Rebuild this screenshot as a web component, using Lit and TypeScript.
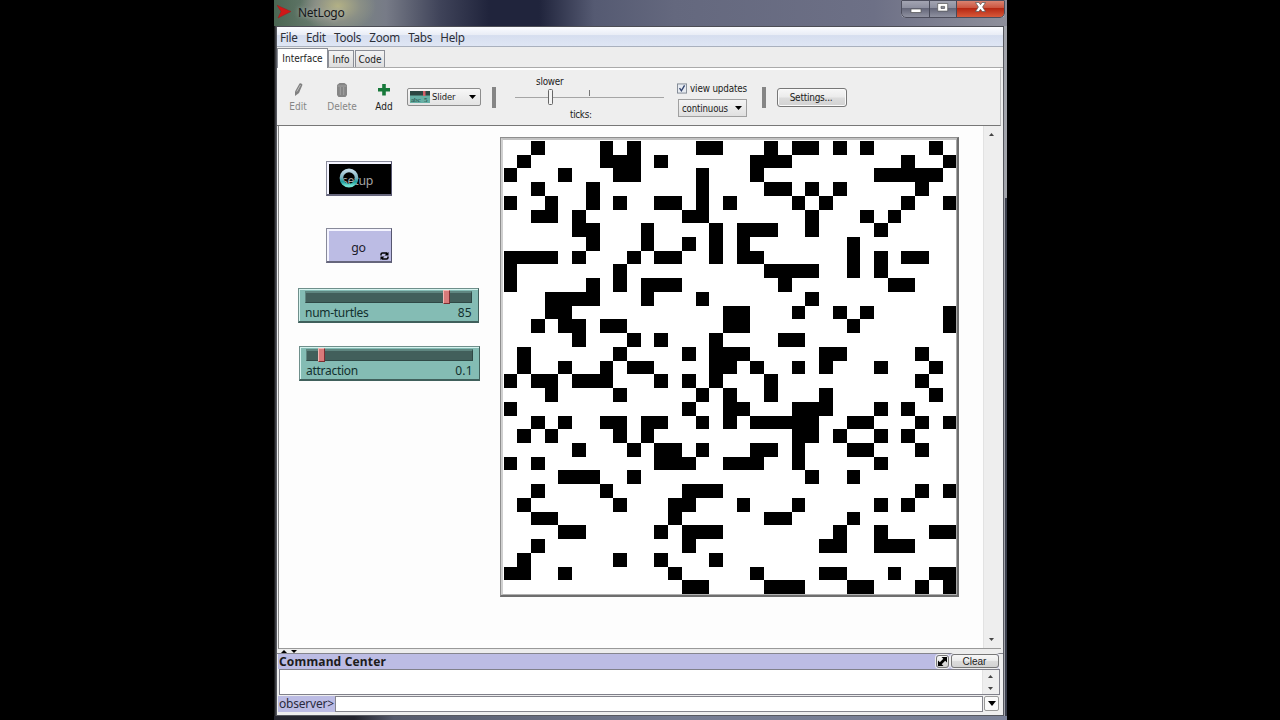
import { LitElement, html, css, svg } from "lit";
import { customElement } from "lit/decorators.js";

// Columns of the black patches, one entry per world row.
const WORLD: number[][] = [
  [2, 7, 9, 14, 15, 19, 21, 22, 24, 26, 31],
  [1, 7, 8, 9, 11, 18, 19, 20, 29, 32],
  [0, 4, 8, 9, 14, 18, 27, 28, 29, 30, 31],
  [2, 6, 14, 19, 20, 22, 24, 30],
  [0, 3, 6, 8, 11, 12, 14, 16, 21, 23, 29, 32],
  [2, 3, 5, 13, 14, 22, 26, 28],
  [5, 6, 10, 15, 17, 18, 19, 22, 27],
  [6, 10, 13, 15, 17, 25],
  [0, 1, 2, 3, 5, 9, 11, 12, 15, 17, 18, 25, 27, 29, 30],
  [0, 8, 19, 20, 21, 22, 25, 27],
  [0, 6, 8, 10, 11, 12, 20, 28, 29],
  [3, 4, 5, 6, 10, 14, 22],
  [3, 4, 16, 17, 21, 24, 26, 32],
  [2, 4, 5, 7, 8, 16, 17, 25, 32],
  [5, 9, 11, 15, 20, 21],
  [1, 8, 13, 15, 16, 17, 23, 24, 30],
  [1, 4, 7, 9, 10, 15, 16, 18, 21, 23, 27, 31],
  [0, 2, 3, 5, 6, 7, 11, 13, 15, 19, 30],
  [3, 8, 14, 16, 19, 23, 31],
  [0, 13, 16, 17, 21, 22, 23, 27, 29],
  [2, 4, 7, 8, 10, 11, 14, 16, 18, 19, 20, 21, 22, 25, 26, 30, 32],
  [1, 3, 8, 10, 21, 22, 24, 27, 29],
  [5, 9, 11, 12, 14, 18, 19, 21, 25, 26, 30],
  [0, 2, 11, 12, 13, 16, 17, 18, 21, 27],
  [4, 5, 6, 9, 22, 25],
  [2, 7, 13, 14, 15, 30, 32],
  [1, 8, 12, 13, 17, 21, 27, 29],
  [2, 3, 12, 19, 20, 25],
  [4, 5, 11, 13, 14, 15, 24, 27, 31, 32],
  [2, 13, 23, 24, 27, 28, 29],
  [1, 8, 11, 15],
  [0, 1, 4, 12, 18, 23, 24, 28, 31, 32],
  [13, 14, 19, 20, 21, 25, 26, 30, 32],
];
const edge = (n: number) => Math.round(n * 13.72 + 0.5);
const rowEdge = (n: number) => Math.round(n * 13.73 + 0.9);

@customElement("world-view")
class WorldView extends LitElement {
  static styles = css`
    :host { display: block; box-sizing: border-box; width: 459px; height: 460px;
      border: 1px solid #8e8e8e; border-right: 2px solid #6e6e6e; border-bottom: 2px solid #6e6e6e;
      background: #fff; }
    .inner { box-sizing: border-box; width: 456px; height: 457px; border: 2px solid #c2c2c2;
      border-left-color: #d0d0d0; border-right: 1px solid #a8a8a8; border-bottom: 1px solid #b0b0b0; }
    svg { display: block; }
  `;
  render() {
    return html`<div class="inner"><svg width="453" height="454" shape-rendering="crispEdges">
      ${WORLD.map((cols, r) => cols.map((c) => svg`<rect x=${edge(c)} y=${rowEdge(r)}
        width=${edge(c + 1) - edge(c)} height=${rowEdge(r + 1) - rowEdge(r)} />`))}
    </svg></div>`;
  }
}

@customElement("model-slider")
class ModelSlider extends LitElement {
  static properties = { name: {}, value: {}, pos: { type: Number } };
  declare name: string;
  declare value: string;
  declare pos: number;
  static styles = css`
    :host { display: block; box-sizing: border-box; width: 181px; height: 35px; background: #84bcb4;
      border: 1px solid #6f8f8b; border-right-color: #40605c; border-bottom: 2px solid #40605c;
      box-shadow: inset 1px 1px #d5f2ee; padding: 2px 6px 0 6px; font: 12px "Noto Sans", sans-serif; color: #12302e; }
    .track { position: relative; height: 9px; background: #425f5b; border: 1px solid #2f4845;
      border-top: 2px solid #5f8680; border-left-color: #5f8680; }
    .thumb { position: absolute; top: -3px; width: 5px; height: 12px; background: #d97a7a;
      border: 1px solid #f3b8b4; border-right-color: #7a2f33; border-bottom-color: #7a2f33; }
    .row { display: flex; justify-content: space-between; line-height: 18px; margin-top: 1px; }
    .label { letter-spacing: -0.28px; }
    .value { letter-spacing: 0.3px; }
  `;
  render() {
    return html`<div class="track"><div class="thumb" style="left:${this.pos}px"></div></div>
      <div class="row"><span class="label">${this.name}</span><span class="value">${this.value}</span></div>`;
  }
}

const arrow = (up: boolean, w = 5, h = 3) => html`<svg width=${w} height=${h} viewBox="0 0 6 4" preserveAspectRatio="none">
  <path d=${up ? "M0 4L3 0L6 4z" : "M0 0L3 4L6 0z"} /></svg>`;

@customElement("app-root")
class AppRoot extends LitElement {
  static styles = css`
    :host { display: flex; width: 1280px; height: 720px; overflow: hidden; background: #000;
      font-family: "DejaVu Sans Condensed", "DejaVu Sans", sans-serif; font-stretch: condensed; font-size: 10px; color: #1c1c1c; white-space: nowrap; }
    * { box-sizing: border-box; }
    svg { display: block; }
    .win { width: 733px; height: 720px; margin-left: 274px; display: flex; flex-direction: column;
      background: linear-gradient(90deg, #1b1b1d 0 1px, #3c3d42 1px 3px, transparent 3px 729px),
        linear-gradient(transparent 198px, #3b3f4c 198px) right / 2px 100% no-repeat, #a2a4ab; }
    .title { height: 26px; flex: none; display: flex; align-items: flex-start;
      background: radial-gradient(ellipse 38px 26px at 64px 6px, #b3b185 0, #8a8f86 60%, transparent 100%),
        linear-gradient(90deg, #4a6652 0, #7b8781 70px, #777b87 112px, #40445a 165px, #20243c 215px, #20243c 265px, #555a72 320px, #64687e 400px, #6d7086 600px, #8e8f9b 733px); }
    .logo { margin: 3px 0 0 3px; }
    .name { margin: 4px 0 0 7px; font: 12px/17px "Noto Sans", sans-serif; letter-spacing: -0.28px; color: #16181a; text-shadow: 0 0 5px #b5bab8; flex: 1; }
    .caps { display: flex; width: 104px; height: 18px; margin-right: 2px; border: 1px solid #d3d4dc; border-top: 0; border-radius: 0 0 5px 5px; overflow: hidden;
      outline: 1px solid #4c4d5c; outline-offset: -1px; }
    .cap { display: flex; justify-content: center; padding-top: 3px; width: 28px; background: linear-gradient(#a6a7b4, #8d8f9f 45%, #656779 50%, #8f91a0); border-right: 1px solid #484a58; }
    .cap.max { width: 27px; }
    .cap.x { flex: 1; border: 0; background: linear-gradient(#dc8a78, #cc5640 45%, #b62813 50%, #d8593a); padding-top: 1px; }
    .body { height: 690px; margin: 0 3px 0 2px; border: 1px solid #56585f; border-top: 1px solid #4c4d55; background: #eee; display: flex; flex-direction: column; }
    .menu { height: 20px; flex: none; display: flex; gap: 8.3px; padding-left: 3px; font: 11.7px/21px "Noto Sans", sans-serif; letter-spacing: -0.28px; color: #2c2f38;
      background: linear-gradient(#fbfcff 0, #e9edf6 40%, #d6deef 45%, #dfe6f4 100%); border-bottom: 1px solid #a9b0bd; }
    .tabs { height: 21px; flex: none; display: flex; align-items: flex-end; background: #ededed; border-bottom: 1px solid #aaa; }
    .tab { height: 17px; line-height: 17px; border: 1px solid #8b8e96; border-bottom: 0; padding: 0; text-align: center; margin-left: 1px; background: linear-gradient(#f3f3f3, #ddd); font-size: 10px; }
    .tab.on { width: 51px; height: 20px; margin: 0 0 -1px 0; background: #fff; line-height: 19px; }
    .tab.info { width: 26px; margin-left: 0; } .tab.code { width: 30px; margin-left: 1px; }
    .tools { height: 58px; flex: none; border-top: 2px solid #fff; border-bottom: 1px solid #777; background: #eee; display: flex; align-items: flex-start;
      margin-right: 2px; border-right: 1px solid #bbb; }
    .tool { display: flex; flex-direction: column; align-items: center; margin-top: 12px; width: 42px; }
    .tool span { line-height: 14px; margin-top: 2px; }
    .tool.off { color: #858585; }
    .tool.del { width: 46px; } .tool.add { width: 38px; }
    .tool svg { height: 16px; }
    .combo { display: flex; align-items: center; width: 74px; height: 18px; margin: 18px 0 0 4px; border: 1px solid #8d8d8d; border-radius: 2px; background: linear-gradient(#f7f7f7, #e3e3e3); padding: 0 4px 0 2px; font-size: 9.4px; letter-spacing: -0.1px; }
    .combo span { flex: 1; margin: -1px 0 0 2px; }
    .bar { width: 4px; height: 21px; background: #858585; margin: 17px 0 0 11px; }
    .bar.far { margin-left: 15px; }
    .speed { width: 149px; height: 52px; margin-left: 19px; display: flex; flex-direction: column; }
    .speed .s { margin: 5px 0 0 21px; line-height: 14px; font-size: 9.8px; letter-spacing: -0.2px; }
    .speed .t { margin: 2px 0 0 55px; line-height: 14px; font-size: 9.8px; letter-spacing: -0.3px; }
    .updates { margin: 11px 0 0 13px; width: 70px; }
    .check { display: flex; align-items: center; gap: 3px; height: 14px; font-size: 9.8px; letter-spacing: -0.15px; }
    .drop { display: flex; align-items: center; justify-content: space-between; width: 69px; height: 18px; margin: 4px 0 0 1px; border: 1px solid #a0a0a0; background: linear-gradient(#f4f4f4, #e0e0e0); padding: 0 4px 0 3px; font-size: 9.6px; letter-spacing: -0.15px; }
    .btn { border: 1px solid #777; border-radius: 3px; background: linear-gradient(#f7f7f7 0, #ebebeb 48%, #dcdcdc 52%, #d2d2d2); box-shadow: inset 0 0 0 1px #fafafa; text-align: center; }
    .settings { width: 70px; height: 19px; line-height: 17px; margin: 18px 0 0 11px; font-size: 10px; letter-spacing: -0.25px; padding-right: 2px; }
    .stage { height: 523px; flex: none; display: flex; margin: 0 2px 0 1px; border-left: 1px solid #888; border-bottom: 1px solid #999; background: #fdfdfd; }
    .canvas { position: relative; flex: 1; }
    .item { position: absolute; }
    .world { left: 221px; top: 11px; } .s1 { left: 19px; top: 162px; } .s2 { left: 20px; top: 220px; }
    .pad { position: absolute; left: 47px; width: 66px; height: 35px; border: 1px solid #888a9a; border-right: 1px solid #565670; border-bottom: 2px solid #66667c;
      box-shadow: inset 2px 2px #f4f4ff; background: #bcbce4; text-align: center; font: 12.3px/37px "Noto Sans", sans-serif; letter-spacing: -0.2px; color: #1d1d2c; padding-right: 1px; }
    .setup { top: 35px; background: #000; color: #a5a5a5; letter-spacing: -0.3px; padding-right: 3px; line-height: 38px; } .go { top: 102px; }
    .spin { position: absolute; left: 12px; top: 6px; }
    .loop { position: absolute; right: 2px; bottom: 1px; }
    .scroll { width: 18px; background: #eee; border-left: 1px solid #e2e2e2; display: flex; flex-direction: column; align-items: center; justify-content: space-between; padding: 7px 3px 7px 0; fill: #444; }
    .split { height: 5px; flex: none; background: #ededed; border-bottom: 1px solid #85858d; display: flex; gap: 4px; padding: 1px 0 0 4px; }
    .head { height: 15px; flex: none; display: flex; margin: 0 4px 0 1px; background: #bcbce4; padding-left: 1px; gap: 2px; }
    .head b { flex: 1; font: bold 12px/16px "Noto Sans", sans-serif; letter-spacing: 0.17px; }
    .exp { width: 13px; height: 13px; margin-top: 1px; padding: 1px; box-shadow: 0 0 0 1px #eee; }
    .clear { width: 48px; height: 14px; font: 10px/13px "Liberation Sans", sans-serif; box-shadow: 0 0 0 1px #eee; padding-right: 1px; }
    .out { height: 26px; flex: none; margin: 0 3px 0 2px; border: 1px solid #80808a; background: #fff; display: flex; justify-content: flex-end; }
    .out .scroll { width: 17px; padding: 5px 1px 4px 0; }
    .in { height: 17px; flex: none; display: flex; margin: 1px 4px 0 1px; background: #eee; }
    .who { width: 57px; height: 16px; background: #bcbce4; font: 12px/15px "Noto Sans", sans-serif; letter-spacing: -0.2px; padding-left: 1px; color: #2a2a3c; }
    .field { flex: 1; height: 16px; background: #fff; border: 1px solid #85858d; }
    .hist { width: 15px; height: 15px; margin-left: 1px; border: 1px solid #999; border-radius: 2px; background: #fafafa; display: flex; align-items: center; justify-content: center; }
    .foot { flex: 1; background: linear-gradient(90deg, #23242d 0 80px, #555a6b 120px, #757c92 400px, #7b8298); }
  `;
  render() {
    return html`<div class="win">
      <div class="title">
        <svg class="logo" width="14" height="17" viewBox="0 0 14 17"><path d="M0 2.200L14 8.500L1 15L4 8.500z" fill="#d01818" stroke="#a01414" stroke-width=".4"/></svg>
        <span class="name">NetLogo</span>
        <div class="caps">
          <div class="cap"><svg width="12" height="12"><rect x="1" y="6" width="10" height="3.400" fill="#fff" stroke="#555" stroke-width=".7"/></svg></div>
          <div class="cap max"><svg width="12" height="9"><path fill-rule="evenodd" d="M.7.5h10v7.600h-10zM4 3.400h3.600v2H4z" fill="#fff" stroke="#555" stroke-width=".7"/></svg></div>
          <div class="cap x"><svg width="13" height="12" viewBox="0 0 13 12"><path d="M1.500 1.500h3.400L6.500 3.700L8.100 1.500h3.400L8.600 6l2.900 4.500H8.100L6.500 8.200L4.900 10.500H1.500L4.400 6z" fill="#fff" stroke="#555" stroke-width=".7"/></svg></div>
        </div>
      </div>
      <div class="body">
        <div class="menu">${["File", "Edit", "Tools", "Zoom", "Tabs", "Help"].map((m) => html`<span>${m}</span>`)}</div>
        <div class="tabs"><div class="tab on">Interface</div><div class="tab info">Info</div><div class="tab code">Code</div></div>
        <div class="tools">
          <div class="tool off"><svg width="12" height="16" viewBox="0 0 12 16"><path d="M3 9.500L7.500 1.500Q9.500 .5 10.500 2.800L7 11L3 14z" fill="#808080"/><path d="M4.800 9.500L8.500 3" stroke="#bbb" fill="none"/></svg><span>Edit</span></div>
          <div class="tool off del"><svg width="12" height="16" viewBox="0 0 12 16"><path d="M1 3L3.500 1h5L11 3v10L9.500 15h-7L1 13z" fill="#858585"/><path d="M1.500 4h9M4.300 5v8M7.700 5v8" stroke="#aaa" fill="none" stroke-width=".8"/></svg><span>Delete</span></div>
          <div class="tool add"><svg width="14" height="16" viewBox="0 0 14 16"><path d="M5.200 2h3.600v4H13v3.400H8.800v4H5.200v-4H1V6h4.200z" fill="#17793a"/></svg><span>Add</span></div>
          <div class="combo"><svg width="20" height="12" viewBox="0 0 20 12"><rect width="20" height="12" fill="#67b0a5"/><rect width="20" height="4.500" fill="#2c4642"/><rect x="13" width="2.500" height="5" fill="#d4606a"/><text x="1" y="11" font-size="7" font-family="Liberation Serif" fill="#173f3a">abc</text><text x="14" y="11" font-size="7" font-family="Liberation Serif" fill="#173f3a">5</text></svg><span>Slider</span>${arrow(false, 7, 4)}</div>
          <div class="bar"></div>
          <div class="speed"><span class="s">slower</span>
            <svg width="149" height="17" viewBox="0 0 149 17"><path d="M0 8.500H149" stroke="#a5a5a5"/><path d="M74.500 1v6" stroke="#777"/><rect x="33.500" y=".5" width="4" height="15" rx="1" fill="#f4f4f4" stroke="#666"/></svg>
            <span class="t">ticks:</span></div>
          <div class="updates"><div class="check"><svg width="11" height="11" viewBox="0 0 11 11"><rect x=".5" y=".5" width="10" height="10" fill="#e7ebf1" stroke="#7d8590"/><path d="M2.800 5L4.800 8L8.300 2" fill="none" stroke="#34466f" stroke-width="1.500"/></svg>view updates</div>
            <div class="drop">continuous${arrow(false, 7, 4)}</div></div>
          <div class="bar far"></div>
          <div class="btn settings">Settings...</div>
        </div>
        <div class="stage">
          <div class="canvas">
            <div class="pad setup">setup<svg class="spin" width="20" height="20" viewBox="0 0 20 20"><defs><linearGradient id="g" x1="0" y1="0" x2="0" y2="1"><stop offset="0" stop-color="#bcd6e4"/><stop offset=".45" stop-color="#80b4c2"/><stop offset=".75" stop-color="#1e9c9c"/><stop offset="1" stop-color="#6fe0d0"/></linearGradient></defs><circle cx="10" cy="10" r="7.600" fill="none" stroke="url(#g)" stroke-width="3.600"/></svg></div>
            <div class="pad go">go<svg class="loop" width="9" height="8" viewBox="0 0 9 8"><path d="M1 3.500V2.500Q1 1 2.500 1H6.500V3M8 4.500V5.500Q8 7 6.500 7H2.500V5" fill="none" stroke="#000" stroke-width="1.500"/><path d="M4.500 3.500L8.500 0V3.500zM4.500 4.500L.5 8V4.500z"/></svg></div>
            <model-slider class="item s1" name="num-turtles" value="85" .pos=${137}></model-slider>
            <model-slider class="item s2" name="attraction" value="0.1" .pos=${11}></model-slider>
            <world-view class="item world"></world-view>
          </div>
          <div class="scroll">${arrow(true, 5, 3)}${arrow(false, 5, 3)}</div>
        </div>
        <div class="split">${arrow(true, 6, 3)}${arrow(false, 6, 3)}</div>
        <div class="head"><b>Command Center</b>
          <div class="btn exp"><svg width="9" height="9" viewBox="0 0 9 9"><path d="M3.500 0H9V5.500L7.200 3.700L3.700 7.200L5.500 9H0V3.500L1.800 5.300L5.300 1.800z"/></svg></div>
          <div class="btn clear">Clear</div></div>
        <div class="out"><div class="scroll">${arrow(true, 5, 3)}${arrow(false, 5, 3)}</div></div>
        <div class="in"><div class="who">observer&gt;</div><div class="field"></div><div class="hist">${arrow(false, 8, 5)}</div></div>
      </div>
      <div class="foot"></div>
    </div>`;
  }
}
